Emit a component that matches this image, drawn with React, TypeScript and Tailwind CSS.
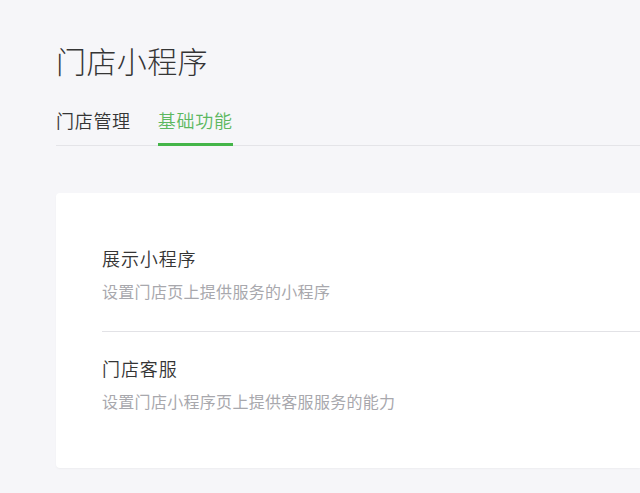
export default function App() {
  const items = [
    { title: "展示小程序", desc: "设置门店页上提供服务的小程序", cls: "border-b border-[#e2e2e6] pt-[25px] pb-[29px]" },
    { title: "门店客服", desc: "设置门店小程序页上提供客服服务的能力", cls: "pt-[24px] pb-[28px]" },
  ];

  return (
    <div
      className="min-h-[493px] bg-[#f6f6f9] pl-[56px] pt-[40px] text-[#353535]"
      style={{ fontFamily: '"Noto Sans CJK SC", "Noto Sans", sans-serif' }}
    >
      <h1 className="text-[30px] font-light leading-[40px] tracking-[0.4px]">门店小程序</h1>

      <div className="mt-[28px] flex gap-[27px] border-b border-[#e4e4e8] text-[18px] font-[350] leading-[24px] tracking-[0.7px]">
        <div className="-mb-px border-b-[3px] border-transparent pb-[11px]">门店管理</div>
        <div className="-mb-px border-b-[3px] border-[#44b549] pb-[11px] text-[#5cb85f]">基础功能</div>
      </div>

      <div className="mt-[47px] rounded-l-[4px] bg-white py-[28px] pl-[46px] shadow-[0_1px_2px_rgba(0,0,0,0.04)]">
        {items.map((item) => (
          <div key={item.title} className={item.cls}>
            <div className="text-[18px] font-[350] leading-[24px] tracking-[0.9px] text-[#353535]">{item.title}</div>
            <div className="mt-[10px] text-[16px] leading-[22px] tracking-[0.3px] text-[#a8a8ad]">{item.desc}</div>
          </div>
        ))}
      </div>
    </div>
  );
}
